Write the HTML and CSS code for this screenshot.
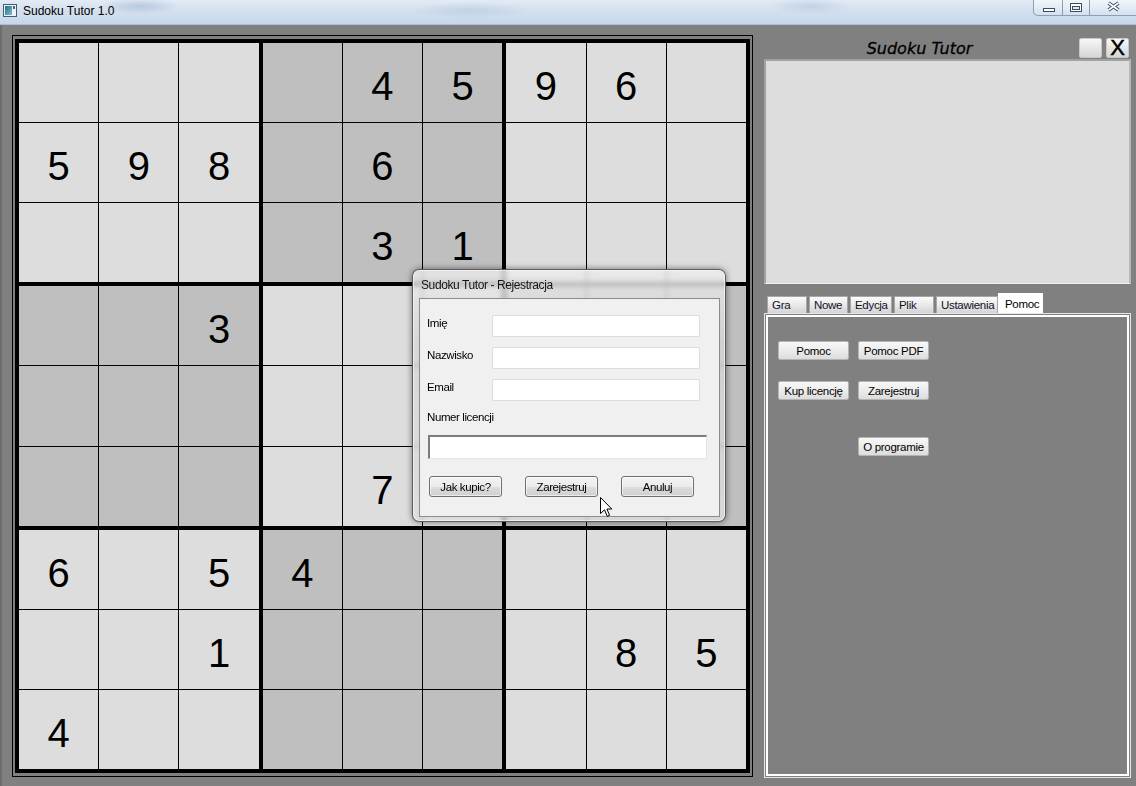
FILE: index.html
```html
<!DOCTYPE html>
<html lang="pl">
<head>
<meta charset="utf-8">
<title>Sudoku Tutor 1.0</title>
<link rel="stylesheet" href="styles.css">
</head>
<body>
<div class="window">
  <div class="titlebar">
    <svg class="app-icon" width="14" height="13" viewBox="0 0 14 13">
      <defs>
        <linearGradient id="ig" x1="0" y1="0" x2="1" y2="1">
          <stop offset="0" stop-color="#1f6f7a"/>
          <stop offset="1" stop-color="#7cc0d8"/>
        </linearGradient>
      </defs>
      <rect x="0.5" y="0.5" width="13" height="12" fill="#eef2f6" stroke="#4b5a68"/>
      <rect x="2" y="2" width="7" height="9" fill="url(#ig)"/>
      <rect x="10" y="2" width="2" height="3" fill="#3b6f8f"/>
    </svg>
    <span class="title">Sudoku Tutor 1.0</span>
    <div class="caption">
      <div class="cap-btn cap-min">
        <svg width="28" height="15" viewBox="0 0 28 15"><rect x="9.5" y="8.5" width="11" height="3" fill="#fff" stroke="#3c4c63"/></svg>
      </div>
      <div class="cap-btn cap-max">
        <svg width="26" height="15" viewBox="0 0 26 15"><rect x="7.5" y="3.5" width="11" height="8" fill="#fff" stroke="#3c4c63"/><rect x="9.5" y="6.5" width="7" height="3" fill="#dfe8f2" stroke="#3c4c63"/></svg>
      </div>
      <div class="cap-btn cap-close">
        <svg width="47" height="15" viewBox="0 0 47 15"><path d="M18.5 3 L28.5 10 M28.5 3 L18.5 10" stroke="#3c4c63" stroke-width="3.4" fill="none"/><path d="M18.5 3 L28.5 10 M28.5 3 L18.5 10" stroke="#ffffff" stroke-width="1.6" fill="none"/></svg>
      </div>
    </div>
  </div>

  <div class="client">
    <div class="board-frame">
      <div class="board">
        <div class="box">
          <div class="cell"></div><div class="cell"></div><div class="cell"></div>
          <div class="cell">5</div><div class="cell">9</div><div class="cell">8</div>
          <div class="cell"></div><div class="cell"></div><div class="cell"></div>
        </div>
        <div class="box dark">
          <div class="cell"></div><div class="cell">4</div><div class="cell">5</div>
          <div class="cell"></div><div class="cell">6</div><div class="cell"></div>
          <div class="cell"></div><div class="cell">3</div><div class="cell">1</div>
        </div>
        <div class="box">
          <div class="cell">9</div><div class="cell">6</div><div class="cell"></div>
          <div class="cell"></div><div class="cell"></div><div class="cell"></div>
          <div class="cell"></div><div class="cell"></div><div class="cell"></div>
        </div>
        <div class="box dark">
          <div class="cell"></div><div class="cell"></div><div class="cell">3</div>
          <div class="cell"></div><div class="cell"></div><div class="cell"></div>
          <div class="cell"></div><div class="cell"></div><div class="cell"></div>
        </div>
        <div class="box">
          <div class="cell"></div><div class="cell"></div><div class="cell"></div>
          <div class="cell"></div><div class="cell"></div><div class="cell"></div>
          <div class="cell"></div><div class="cell">7</div><div class="cell"></div>
        </div>
        <div class="box dark">
          <div class="cell"></div><div class="cell"></div><div class="cell"></div>
          <div class="cell"></div><div class="cell"></div><div class="cell"></div>
          <div class="cell"></div><div class="cell"></div><div class="cell"></div>
        </div>
        <div class="box">
          <div class="cell">6</div><div class="cell"></div><div class="cell">5</div>
          <div class="cell"></div><div class="cell"></div><div class="cell">1</div>
          <div class="cell">4</div><div class="cell"></div><div class="cell"></div>
        </div>
        <div class="box dark">
          <div class="cell">4</div><div class="cell"></div><div class="cell"></div>
          <div class="cell"></div><div class="cell"></div><div class="cell"></div>
          <div class="cell"></div><div class="cell"></div><div class="cell"></div>
        </div>
        <div class="box">
          <div class="cell"></div><div class="cell"></div><div class="cell"></div>
          <div class="cell"></div><div class="cell">8</div><div class="cell">5</div>
          <div class="cell"></div><div class="cell"></div><div class="cell"></div>
        </div>
      </div>
    </div>

    <div class="side">
      <div class="side-head">
        <div class="side-title">Sudoku Tutor</div>
        <button class="mini"></button>
        <button class="mini mini-x">X</button>
      </div>
      <div class="display"></div>
      <div class="tabs">
        <div class="tab">Gra</div>
        <div class="tab tab-39">Nowe</div>
        <div class="tab tab-42">Edycja</div>
        <div class="tab">Plik</div>
        <div class="tab tab-62">Ustawienia</div>
        <div class="tab active">Pomoc</div>
      </div>
      <div class="tabpanel">
        <div class="tabpanel-inner">
          <div class="tool-row">
            <button class="btn">Pomoc</button>
            <button class="btn">Pomoc PDF</button>
          </div>
          <div class="tool-row">
            <button class="btn">Kup licencję</button>
            <button class="btn">Zarejestruj</button>
          </div>
          <div class="tool-row tool-row-last">
            <button class="btn">O programie</button>
          </div>
        </div>
      </div>
    </div>
  </div>

  <div class="dialog">
    <div class="dlg-title">Sudoku Tutor - Rejestracja</div>
    <div class="dlg-client">
      <div class="field-row">
        <label class="field-label">Imię</label>
        <div class="inp"></div>
      </div>
      <div class="field-row">
        <label class="field-label">Nazwisko</label>
        <div class="inp"></div>
      </div>
      <div class="field-row">
        <label class="field-label">Email</label>
        <div class="inp"></div>
      </div>
      <div class="lic-label">Numer licencji</div>
      <div class="lic-inp"></div>
      <div class="dlg-buttons">
        <button class="dbtn">Jak kupic?</button>
        <button class="dbtn">Zarejestruj</button>
        <button class="dbtn">Anuluj</button>
      </div>
    </div>
  </div>

  <svg class="cursor" width="13" height="21" viewBox="0 0 13 21">
    <path d="M0.5 0.5 L0.5 16.5 L4.5 12.8 L7.3 19.3 L9.6 18.3 L6.9 12 L11.8 12 Z" fill="#fff" stroke="#000" stroke-width="1" stroke-linejoin="miter"/>
  </svg>
</div>
</body>
</html>
```

FILE: styles.css
```css
html, body {
  margin: 0;
  padding: 0;
}
body {
  width: 1136px;
  height: 786px;
  overflow: hidden;
  font-family: "Liberation Sans", Arial, sans-serif;
  background: #808080;
}
.window {
  position: relative;
  width: 1136px;
  height: 786px;
  background: #808080;
  overflow: hidden;
}

/* ---------- title bar ---------- */
.titlebar {
  height: 25px;
  box-sizing: border-box;
  display: flex;
  align-items: flex-start;
  background:
    radial-gradient(ellipse 40px 8px at 140px 6px, rgba(120,150,190,0.35), transparent),
    radial-gradient(ellipse 60px 8px at 470px 10px, rgba(140,165,200,0.25), transparent),
    radial-gradient(ellipse 40px 8px at 810px 6px, rgba(140,165,200,0.3), transparent),
    linear-gradient(to bottom, #e2ebf5 0%, #d3e0ee 45%, #c7d7ea 100%);
  border-bottom: 1px solid #aebdcf;
}
.app-icon {
  margin: 4px 0 0 3px;
  flex: none;
}
.title {
  margin: 4px 0 0 6px;
  font-size: 12px;
  line-height: 14px;
  color: #000;
}
.caption {
  margin-left: auto;
  display: flex;
  height: 16px;
  margin-right: -3px;
}
.cap-btn {
  height: 16px;
  box-sizing: border-box;
  border: 1px solid rgba(70, 92, 122, 0.55);
  border-top: none;
  background: linear-gradient(to bottom, rgba(255,255,255,0.55), rgba(220,232,245,0.35));
  display: flex;
}
.cap-min {
  width: 29px;
  border-bottom-left-radius: 5px;
  border-right: none;
}
.cap-max {
  width: 28px;
}
.cap-close {
  width: 49px;
  border-left: none;
}

/* ---------- client area ---------- */
.client {
  display: flex;
  height: 761px;
  box-sizing: border-box;
  border-left: 2px solid #6e6e6e;
}

.board-frame {
  align-self: flex-start;
  margin: 10px 0 0 10px;
  border: 1px solid #000;
  padding: 3px 2px;
}
.board {
  width: 735px;
  height: 734px;
  box-sizing: border-box;
  padding: 4px;
  background: #000;
  display: grid;
  grid-template-columns: repeat(3, 1fr);
  grid-template-rows: repeat(3, 1fr);
  gap: 4px;
}
.box {
  display: grid;
  grid-template-columns: repeat(3, 1fr);
  grid-template-rows: repeat(3, 1fr);
  gap: 1px;
  min-width: 0;
  min-height: 0;
}
.cell {
  display: flex;
  align-items: center;
  justify-content: center;
  box-sizing: border-box;
  padding-top: 7px;
  background: #dddddd;
  font-family: "Liberation Sans", Arial, sans-serif;
  font-size: 40px;
  line-height: 1;
  color: #000;
  min-width: 0;
  min-height: 0;
}
.box.dark .cell {
  background: #bfbfbf;
}

/* ---------- side panel ---------- */
.side {
  width: 367px;
  margin: 13px 0 0 11px;
  display: flex;
  flex-direction: column;
}
.side-head {
  display: flex;
  align-items: center;
  height: 20px;
  padding-right: 2px;
}
.side-title {
  flex: 1;
  text-align: center;
  font-family: "DejaVu Sans", Verdana, sans-serif;
  font-style: italic;
  font-size: 16px;
  line-height: 20px;
  color: #000;
  -webkit-text-stroke: 0.3px #000;
  padding-top: 1px;
}
.mini {
  width: 23px;
  height: 20px;
  margin: 0 0 0 4px;
  padding: 0;
  box-sizing: border-box;
  border: 1px solid #c8c8c8;
  border-radius: 2px;
  background: linear-gradient(to bottom, #f8f8f8, #e6e6e6 50%, #d6d6d6);
  font-family: "Liberation Sans", Arial, sans-serif;
}
.mini-x {
  font-size: 22px;
  line-height: 18px;
  color: #000;
  -webkit-text-stroke: 0.5px #000;
}
.display {
  margin-top: 1px;
  height: 225px;
  box-sizing: border-box;
  background: #dddddd;
  border: 2px solid #a2a2a2;
  border-right-color: #b8b8b8;
  border-bottom: 1px solid #eeeeee;
}

.tabs {
  display: flex;
  align-items: flex-end;
  height: 20px;
  margin-top: 9px;
  padding-left: 3px;
}
.tab {
  height: 17px;
  width: 40px;
  box-sizing: border-box;
  padding: 1px 0 0 4px;
  margin-right: 2px;
  border: 1px solid #a6a6a6;
  border-bottom: none;
  background: linear-gradient(to bottom, #fbfbfb, #e9e9e9 50%, #d4d4d4);
  font-size: 11.5px;
  line-height: 15px;
  letter-spacing: -0.3px;
  white-space: nowrap;
  color: #10102a;
}
.tab.tab-39 {
  width: 39px;
}
.tab.tab-42 {
  width: 42px;
}
.tab.tab-62 {
  width: 62px;
  margin-right: 0;
}
.tab.active {
  height: 20px;
  width: 45px;
  margin-right: 0;
  padding: 3px 0 0 6px;
  background: #ffffff;
  border-color: #ffffff;
  color: #000;
}

.tabpanel {
  height: 465px;
  box-sizing: border-box;
  border: 1px solid #e6e6e6;
  padding: 1px;
}
.tabpanel-inner {
  height: 100%;
  box-sizing: border-box;
  border: 2px solid #ffffff;
  padding: 24px 0 0 10px;
}
.tool-row {
  display: flex;
  gap: 9px;
}
.tool-row + .tool-row {
  margin-top: 21px;
}
.tool-row.tool-row-last {
  margin-top: 37px;
  padding-left: 80px;
}
.btn {
  width: 71px;
  height: 19px;
  box-sizing: border-box;
  padding: 0;
  border: 1px solid #b4b4b4;
  border-radius: 2px;
  background: linear-gradient(to bottom, #f8f8f8 0%, #ececec 50%, #dcdcdc 100%);
  font-family: "Liberation Sans", Arial, sans-serif;
  font-size: 11.5px;
  letter-spacing: -0.3px;
  color: #000;
}

/* ---------- registration dialog ---------- */
.dialog {
  position: absolute;
  left: 412px;
  top: 269px;
  width: 314px;
  height: 253px;
  box-sizing: border-box;
  border: 1px solid rgba(60, 60, 60, 0.8);
  border-radius: 7px;
  padding: 0 5px 0 6px;
  background: linear-gradient(to bottom, rgba(236,236,236,0.78) 0%, rgba(214,214,214,0.72) 30%, rgba(222,222,222,0.75) 100%);
  backdrop-filter: blur(2.5px);
  -webkit-backdrop-filter: blur(2.5px);
  box-shadow: 0 0 6px rgba(0,0,0,0.5), inset 0 0 0 1px rgba(255,255,255,0.55);
  display: flex;
  flex-direction: column;
}
.dlg-title {
  height: 28px;
  flex: none;
  box-sizing: border-box;
  padding: 8px 0 0 2px;
  font-size: 12px;
  line-height: 14px;
  letter-spacing: -0.4px;
  color: #141414;
}
.dlg-client {
  height: 219px;
  flex: none;
  box-sizing: border-box;
  border: 1px solid #8c8c8c;
  background: #f0f0f0;
  padding: 16px 0 0 7px;
  font-size: 11.5px;
  letter-spacing: -0.4px;
  color: #000;
}
.field-row {
  display: flex;
  height: 22px;
}
.field-row + .field-row {
  margin-top: 10px;
}
.field-label {
  width: 65px;
  padding-top: 2px;
  line-height: 13px;
}
.inp {
  width: 208px;
  height: 22px;
  box-sizing: border-box;
  background: #ffffff;
  border: 1px solid #dcdcdc;
  border-radius: 2px;
}
.lic-label {
  margin-top: 10px;
  line-height: 13px;
}
.lic-inp {
  margin: 11px 0 0 1px;
  width: 279px;
  height: 24px;
  box-sizing: border-box;
  background: #ffffff;
  border-style: solid;
  border-width: 2px 1px 1px 2px;
  border-color: #7c7c7c #e4e4e4 #e4e4e4 #7c7c7c;
}
.dlg-buttons {
  display: flex;
  gap: 23px;
  margin: 17px 0 0 2px;
}
.dbtn {
  width: 73px;
  height: 21px;
  box-sizing: border-box;
  padding: 0;
  border: 1px solid #707070;
  border-radius: 3px;
  background: linear-gradient(to bottom, #f3f3f3 0%, #ebebeb 50%, #dddddd 51%, #cfcfcf 100%);
  box-shadow: inset 0 0 0 1px rgba(255,255,255,0.6);
  font-family: "Liberation Sans", Arial, sans-serif;
  font-size: 11.5px;
  letter-spacing: -0.4px;
  color: #000;
}

.cursor {
  position: absolute;
  left: 600px;
  top: 497px;
}
```
